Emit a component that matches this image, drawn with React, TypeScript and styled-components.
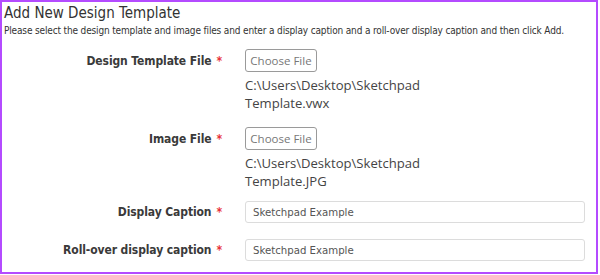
import React from "react";
import styled, { createGlobalStyle } from "styled-components";

const Global = createGlobalStyle`
  html, body { margin: 0; padding: 0; background: #fff; }
  * { box-sizing: border-box; }
`;

const Frame = styled.div`
  width: 598px;
  height: 274px;
  border: 2px solid #b44bff;
  padding: 2px 11px 0 2px;
  font-family: "DejaVu Sans", Verdana, sans-serif;
  color: #333;
`;

const Title = styled.h1`
  margin: 0;
  font-family: "DejaVu Sans Condensed", "DejaVu Sans", Verdana, sans-serif;
  font-weight: normal;
  font-size: 15px;
  line-height: 18px;
  color: #333;
`;

const Intro = styled.p`
  margin: 2px 0 0;
  font-family: "DejaVu Sans Condensed", "DejaVu Sans", sans-serif;
  font-size: 10px;
  letter-spacing: -0.15px;
  line-height: 14px;
  color: #333;
  white-space: nowrap;
`;

const Form = styled.div`
  display: grid;
  grid-template-columns: 218px 1fr;
  column-gap: 23px;
  margin-top: 11px;
`;

const LabelCell = styled.div<{ $h: number }>`
  height: ${(p) => p.$h}px;
  display: flex;
  align-items: center;
  justify-content: flex-end;
  font-family: "DejaVu Sans Condensed", "DejaVu Sans", sans-serif;
  font-weight: bold;
  font-size: 12px;
  letter-spacing: -0.1px;
  color: #3a3a3a;
  white-space: nowrap;
`;

const Star = styled.span`
  color: #e8313a;
  margin-left: 5px;
`;

const ControlCell = styled.div<{ $mb: number }>`
  margin-bottom: ${(p) => p.$mb}px;
`;

const FileButton = styled.button`
  display: block;
  height: 23px;
  width: 72px;
  padding: 0;
  border: 1px solid #9a9a9a;
  border-radius: 3px;
  background: #fff;
  font-family: "Open Sans", sans-serif;
  font-size: 11.5px;
  color: #777;
`;

const Path = styled.div`
  margin-top: 4px;
  font-family: "Open Sans", sans-serif;
  font-size: 13.1px;
  line-height: 18px;
  color: #444;
`;

const TextInput = styled.input`
  display: block;
  width: 100%;
  height: 22px;
  padding: 0 7px;
  border: 1px solid #dcdcdc;
  border-radius: 3px;
  font-family: "DejaVu Sans Condensed", "DejaVu Sans", sans-serif;
  font-size: 11.3px;
  color: #555;
  outline: none;
`;

export default function App() {
  return (
    <>
      <Global />
      <Frame>
        <Title>Add New Design Template</Title>
        <Intro>
          Please select the design template and image files and enter a display caption and a
          roll-over display caption and then click Add.
        </Intro>
        <Form>
          <LabelCell $h={23}>
            Design Template File<Star>*</Star>
          </LabelCell>
          <ControlCell $mb={15}>
            <FileButton>Choose File</FileButton>
            <Path>
              C:\Users\Desktop\Sketchpad
              <br />
              Template.vwx
            </Path>
          </ControlCell>
          <LabelCell $h={23}>
            Image File<Star>*</Star>
          </LabelCell>
          <ControlCell $mb={11}>
            <FileButton>Choose File</FileButton>
            <Path>
              C:\Users\Desktop\Sketchpad
              <br />
              Template.JPG
            </Path>
          </ControlCell>
          <LabelCell $h={22}>
            Display Caption<Star>*</Star>
          </LabelCell>
          <ControlCell $mb={16}>
            <TextInput defaultValue="Sketchpad Example" />
          </ControlCell>
          <LabelCell $h={22}>
            Roll-over display caption<Star>*</Star>
          </LabelCell>
          <ControlCell $mb={0}>
            <TextInput defaultValue="Sketchpad Example" />
          </ControlCell>
        </Form>
      </Frame>
    </>
  );
}
